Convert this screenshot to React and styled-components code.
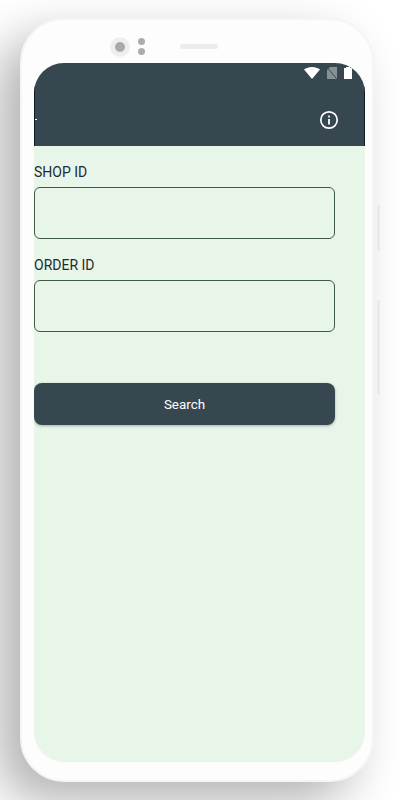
import styled, { createGlobalStyle } from 'styled-components';

const GlobalStyle = createGlobalStyle`
	html, body {
		margin: 0;
		padding: 0;
		background: #fff;
	}
	* {
		box-sizing: border-box;
	}
`;

const Page = styled.div`
	width: 400px;
	height: 800px;
	padding: 18px 26px 18px 20px;
	overflow: hidden;
	font-family: Roboto, 'Liberation Sans', sans-serif;
`;
const Phone = styled.div`
	position: relative;
	width: 354px;
	height: 764px;
	padding: 0 7px 18px 12px;
	display: flex;
	flex-direction: column;
	background: #fdfdfd;
	border: 2px solid #f5f5f5;
	border-radius: 44px;
	box-shadow: -22px 20px 50px rgba(0, 0, 0, 0.3);
`;
const SideButton = styled.span`
	position: absolute;
	left: 355px;
	top: ${(p) => p.$top}px;
	width: 3px;
	height: ${(p) => p.$height}px;
	background: #eaeaea;
`;
const TopBar = styled.div`
	height: 43px;
	flex-shrink: 0;
	display: flex;
	align-items: center;
	padding: 10px 0 0 76px;
`;
const Lens = styled.span`
	width: 20px;
	height: 20px;
	display: flex;
	align-items: center;
	justify-content: center;
	background: #eeeeee;
	border-radius: 50%;
	&::after {
		content: '';
		width: 10px;
		height: 10px;
		background: #a9a9a9;
		border-radius: 50%;
	}
`;
const Sensors = styled.span`
	margin-left: 8px;
	display: flex;
	flex-direction: column;
	gap: 3px;
	i {
		width: 7px;
		height: 7px;
		background: #acacac;
		border-radius: 50%;
	}
`;
const Speaker = styled.span`
	margin-left: 35px;
	width: 38px;
	height: 5px;
	background: #ececec;
	border-radius: 3px;
`;
const Screen = styled.div`
	flex: 1;
	background: #e8f5e9;
	border-radius: 30px;
	overflow: hidden;
	display: flex;
	flex-direction: column;
`;
const AppBar = styled.header`
	position: relative;
	height: 83px;
	flex-shrink: 0;
	background: #37474f;
	border-left: 1px solid #0d1b2a;
	border-right: 1px solid #0d1b2a;
	&::before {
		content: '';
		position: absolute;
		left: 0;
		top: 56px;
		width: 2px;
		height: 1px;
		background: #fff;
	}
`;
const StatusBar = styled.div`
	height: 22px;
	padding: 4px 12px 0 0;
	display: flex;
	justify-content: flex-end;
	align-items: flex-start;
	gap: 7px;
`;
const ActionRow = styled.div`
	height: 61px;
	padding: 25px 25px 0 0;
	display: flex;
	justify-content: flex-end;
	align-items: flex-start;
	color: #fff;
`;
const Form = styled.form`
	width: 301px;
	display: flex;
	flex-direction: column;
`;
const Label = styled.label`
	display: block;
	height: 16px;
	margin-top: 18px;
	margin-bottom: 7px;
	font-size: 14px;
	line-height: 16px;
	color: #1c2b30;
`;
const Input = styled.input`
	display: block;
	width: 100%;
	height: 52px;
	background: transparent;
	border: 1px solid #3f5a45;
	border-radius: 6px;
	outline: none;
`;
const Button = styled.button`
	height: 42px;
	margin-top: 51px;
	background: #37474f;
	border: none;
	border-radius: 8px;
	box-shadow: 0 1px 3px rgba(0, 0, 0, 0.3);
	color: #fff;
	font: 13.4px Roboto, 'Liberation Sans', sans-serif;
`;

function App() {
	return (
		<Page>
			<GlobalStyle />
			<Phone>
				<SideButton $top={185} $height={46} />
				<SideButton $top={280} $height={94} />
				<TopBar>
					<Lens />
					<Sensors>
						<i />
						<i />
					</Sensors>
					<Speaker />
				</TopBar>
				<Screen>
					<AppBar>
						<StatusBar>
							<svg width="16" height="12" viewBox="0 0 16 12">
								<path d="M0 2.5C2 .9 5 0 8 0s6 .9 8 2.5L8 12z" fill="#fff" />
							</svg>
							<svg width="10" height="12" viewBox="0 0 10 12">
								<path d="M3 0h7v12H0V3z" fill="#fff" opacity="0.4" />
								<path d="M.5 1l9 10.5" stroke="#37474f" strokeWidth="1" />
							</svg>
							<svg width="8" height="12" viewBox="0 0 8 12">
								<path d="M2 1V0h4v1h2v11H0V1z" fill="#fff" />
							</svg>
						</StatusBar>
						<ActionRow>
							<svg width="20" height="20" viewBox="0 0 20 20" fill="none">
								<circle cx="10" cy="10" r="8.2" stroke="currentColor" strokeWidth="1.7" />
								<rect x="9.1" y="9" width="1.8" height="5.5" fill="currentColor" />
								<rect x="9.1" y="5.6" width="1.8" height="1.8" fill="currentColor" />
							</svg>
						</ActionRow>
					</AppBar>
					<Form>
						<Label>SHOP ID</Label>
						<Input />
						<Label>ORDER ID</Label>
						<Input />
						<Button type="button">Search</Button>
					</Form>
				</Screen>
			</Phone>
		</Page>
	);
}

export default App;
